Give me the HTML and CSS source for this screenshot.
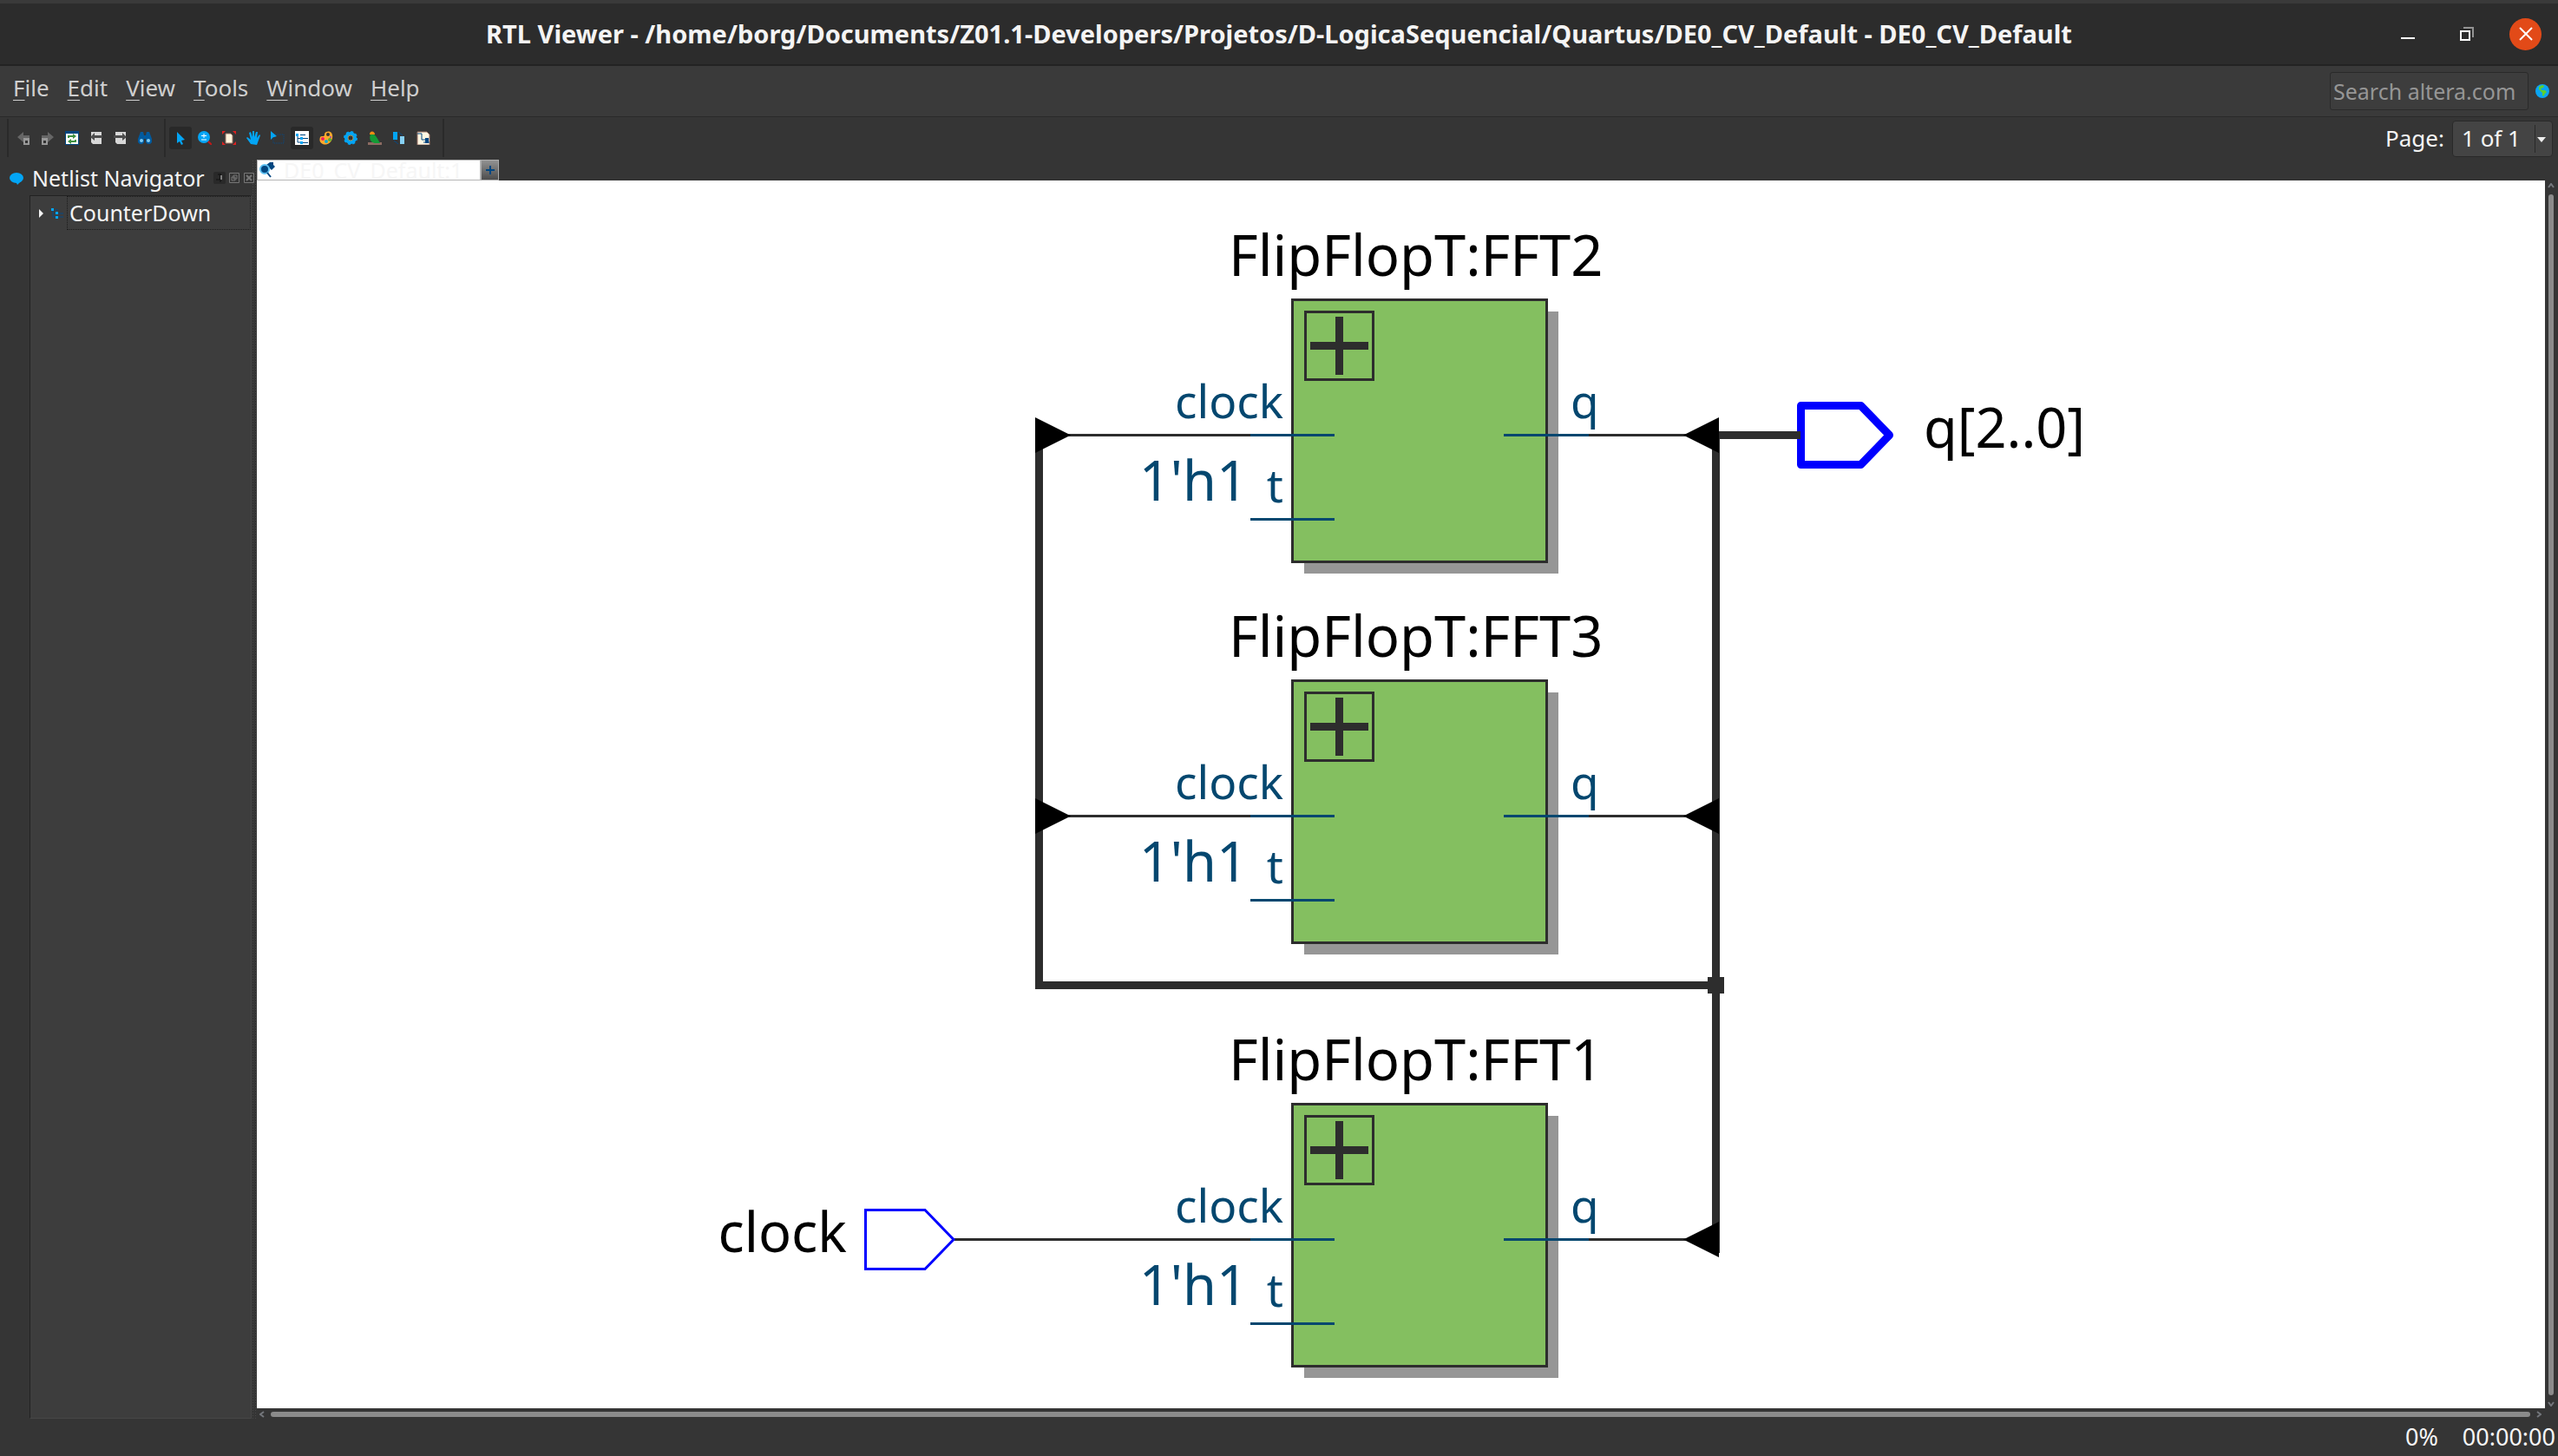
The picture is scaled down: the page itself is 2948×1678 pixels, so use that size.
FILE: index.html
```html
<!DOCTYPE html>
<html lang="en">
<head>
<meta charset="utf-8">
<title>RTL Viewer</title>
<link rel="stylesheet" href="styles.css">
</head>
<body>
<header class="titlebar">
  <h1 class="title">RTL Viewer - /home/borg/Documents/Z01.1-Developers/Projetos/D-LogicaSequencial/Quartus/DE0_CV_Default - DE0_CV_Default</h1>
  <div class="window-buttons">
    <button class="win" aria-label="Minimize"><svg width="16" height="16"><path d="M0 12h16v2H0z" fill="#fff"/></svg></button>
    <button class="win" aria-label="Restore"><svg width="16" height="16" fill="none" stroke-width="2"><path d="M4 1h11v11" stroke="#929292"/><path d="M1 5h10v10H1z" stroke="#fff"/></svg></button>
    <button class="win close" aria-label="Close"><svg width="16" height="16"><path d="M1 1l14 14M15 1L1 15" stroke="#fff" stroke-width="2"/></svg></button>
  </div>
</header>

<div class="menubar">
  <nav class="menus">
    <button class="menu"><u>F</u>ile</button>
    <button class="menu"><u>E</u>dit</button>
    <button class="menu"><u>V</u>iew</button>
    <button class="menu"><u>T</u>ools</button>
    <button class="menu"><u>W</u>indow</button>
    <button class="menu"><u>H</u>elp</button>
  </nav>
  <div class="search">
    <input class="search-box" type="text" placeholder="Search altera.com" aria-label="Search altera.com">
    <svg width="16" height="16" viewBox="0 0 16 16"><circle cx="8" cy="8" r="8" fill="#0ba5f2"/><path d="M4 3l4-2 2 1-1 2-3 1 1 2 4 0 2 2-2 2-2 3-1-1 0-3-3-3-1-1z" fill="#5fd02c"/></svg>
  </div>
</div>

<div class="toolbar">
  <div class="tools">
    <button class="tool" aria-label="Back"><svg width="16" height="16"><path d="M1 7l7-6v4h7v4H8v4z" fill="#666"/><path d="M8 8h7v8H8z" fill="#999"/><path d="M10 11h3v3h-3z" fill="#333"/></svg></button>
    <button class="tool" aria-label="Forward"><svg width="16" height="16"><path d="M15 7L8 1v4H1v4h7v4z" fill="#666"/><path d="M1 8h7v8H1z" fill="#999"/><path d="M3 11h3v3H3z" fill="#333"/></svg></button>
    <button class="tool" aria-label="Refresh"><svg width="16" height="16"><path d="M0 0h16v16H0z" fill="#014680"/><path d="M1 3h14v12H1z" fill="#fff"/><path d="M4 8V6h6M12 10v2H6" fill="none" stroke="#3f9142" stroke-width="2"/><path d="M9 3l4 3-4 3zM7 9l-4 3 4 3z" fill="#3f9142"/></svg></button>
    <button class="tool" aria-label="Previous page"><svg width="16" height="16"><path d="M2 1h12v14H4l-2-2z" fill="#d8d8d8"/><path d="M1 7l5-5v3h9v3H6v3z" fill="#4c4c4c"/></svg></button>
    <button class="tool" aria-label="Next page"><svg width="16" height="16"><path d="M2 1h12v14H4l-2-2z" fill="#d8d8d8"/><path d="M15 7l-5-5v3H0v3h10v3z" fill="#4c4c4c"/></svg></button>
    <button class="tool" aria-label="Find"><svg width="16" height="16"><path d="M3 1h3l1 4h2l1-4h3l3 8v4l-2 2h-3l-2-2V9H7v4l-2 2H2l-2-2V9z" fill="#015a9e"/><circle cx="4" cy="11" r="2" fill="#7fcdf5"/><circle cx="12" cy="11" r="2" fill="#7fcdf5"/></svg></button>
  </div>
  <div class="tools">
    <button class="tool on" aria-label="Select"><svg width="16" height="16"><path d="M4 1l9 9-4 1 2 4-2 1-2-4-3 2z" fill="#03a5f5"/></svg></button>
    <button class="tool" aria-label="Zoom"><svg width="16" height="16"><path d="M11 11l5 5" stroke="#c01818" stroke-width="2"/><circle cx="7" cy="7" r="7" fill="#03a5f5"/><path d="M7 3v5M4 5.500h6M4 10h6" stroke="#fff"/></svg></button>
    <button class="tool" aria-label="Fit"><svg width="16" height="16"><path d="M4 3h6l2 2v9H4z" fill="#fff4dc" stroke="#9b7568"/><path d="M0 0h4L0 4zM16 0h-4l4 4zM0 16h4l-4-4zM16 16h-4l4-4z" fill="#e02020"/></svg></button>
    <button class="tool" aria-label="Pan"><svg width="16" height="16"><path d="M5 15L0 8l1-1 4 3L3 2l2-1 2 6V0h2v7l2-6h2l-1 7 3-4 1 1-4 11z" fill="#03a5f5"/></svg></button>
    <button class="tool" aria-label="Select area"><svg width="16" height="16"><path d="M3 4h12v10H3z" fill="none" stroke="#064a86" stroke-dasharray="1 1"/><path d="M0 0l7 6-3 1-1 0-3 3z" fill="#03a5f5"/></svg></button>
    <button class="tool on" aria-label="Netlist"><svg width="16" height="16"><path d="M0 0h16v16H0z" fill="#fff"/><path d="M3 5v8h4M3 8.500h4M6 4.500h6M9 8.500h6M9 13.500h6" fill="none" stroke="#014680"/><path d="M1 3h3v3H1zM6 7h3v3H6zM6 12h3v3H6z" fill="#03a5f5"/></svg></button>
    <button class="tool" aria-label="Colors"><svg width="16" height="16"><path d="M8 1c5-2 8 2 7 7-1 6-7 9-11 7s-4-5-3-8c1-2 4 0 5-2 0-2 0-3 2-4z" fill="#ffa92b"/><circle cx="4" cy="9" r="2" fill="#ec1c64"/><circle cx="8" cy="12" r="2" fill="#10a8d8"/><circle cx="12" cy="10" r="2" fill="#56b330"/><circle cx="10" cy="4" r="2" fill="#333"/><circle cx="13" cy="7" r="1" fill="#9540c0"/></svg></button>
    <button class="tool" aria-label="Settings"><svg width="16" height="16"><circle cx="8" cy="8" r="7" fill="none" stroke="#03a5f5" stroke-width="2" stroke-dasharray="3 2.500"/><circle cx="8" cy="8" r="5" fill="none" stroke="#03a5f5" stroke-width="4"/><circle cx="8" cy="8" r="3" fill="#333" stroke="#a79455"/></svg></button>
    <button class="tool" aria-label="Bird's eye view"><svg width="16" height="16"><path d="M0 13h16v3H0z" fill="#8d6b62"/><path d="M3 4c5-2 7 3 11 10H8c-5-1-7-5-5-10z" fill="#149a36"/><path d="M2 3c1-4 6-3 6 1H2z" fill="#f28c13"/></svg></button>
    <button class="tool" aria-label="Partition"><svg width="16" height="16"><path d="M1 1h5v9H1z" fill="#03a5f5"/><path d="M9 6h5v9H9z" fill="#86d0f5"/><path d="M7 1l5 4M2 11l5 4" stroke="#064a86"/></svg></button>
    <button class="tool" aria-label="Export"><svg width="16" height="16"><path d="M1 1h11l3 3v12H1z" fill="#fff6e2" stroke="#9b7568"/><path d="M1 3h5v7h8M8 13h7" fill="none" stroke="#014680"/><path d="M10 8h4v6h-4z" fill="#014680"/></svg></button>
  </div>
  <div class="page">
    <label for="page">Page:</label>
    <div class="page-picker">
      <select id="page" class="page-select"><option>1 of 1</option></select>
      <svg class="page-arrow" width="10" height="6"><path d="M0 0h10L5 6z" fill="#eee"/></svg>
    </div>
  </div>
</div>

<main class="workspace">
  <aside class="navigator">
    <div class="nav-head">
      <svg width="16" height="18"><ellipse cx="8" cy="9" rx="8" ry="6" fill="#03a5f5"/><path d="M7 13h6l-4 4z" fill="#03a5f5"/></svg>
      <h2 class="nav-title">Netlist Navigator</h2>
      <div class="nav-buttons">
        <button class="mini dark" aria-label="Pin"><svg width="12" height="12"><path d="M4 2h3v6H2M7 1v10" fill="none" stroke="#111"/><path d="M8 3v5" stroke="#ddd"/></svg></button>
        <button class="mini" aria-label="Float"><svg width="12" height="12" fill="none" stroke="#777"><path d="M.5 .5h11v11H.5zM5 3h4v4H5zM3 5h4v4H3z"/></svg></button>
        <button class="mini" aria-label="Close panel"><svg width="12" height="12" fill="none" stroke="#777"><path d="M.5 .5h11v11H.5z"/><path d="M3 3l6 6M9 3L3 9" stroke-width="2"/></svg></button>
      </div>
    </div>
    <div class="tree">
      <div class="tree-row">
        <svg width="40" height="16"><path d="M10 3l5 5-5 5z" fill="#f4f4f4"/><path d="M26 4v8h12M28 4h4M28 8h10" fill="none" stroke="#064a86"/><path d="M24 2h3v3h-3zM29 6h3v3h-3zM29 11h3v3h-3z" fill="#03a5f5"/></svg>
        <span class="tree-label">CounterDown</span>
      </div>
    </div>
  </aside>
  <div class="splitter"></div>
  <section class="viewer">
    <div class="tabs">
      <button class="tab"><svg width="18" height="18"><path d="M8 3l4-3h4v3l2 2-4 4z" fill="#014680"/><circle cx="6" cy="8" r="5" fill="#014680" stroke="#5fc1f2" stroke-width="2"/><path d="M9 12l4 5" stroke="#014680" stroke-width="2"/></svg><span>DE0_CV_Default:1</span></button>
      <button class="tab-add" aria-label="New tab"><svg width="10" height="10"><path d="M0 5h10M5 0v10" stroke="#014680" stroke-width="2"/></svg></button>
    </div>
    <div class="view">
      <div class="canvas">
        <svg class="diagram" viewBox="296 208 2637 1415">
          <defs>
            <g id="flipflop">
              <path class="shadow" d="M1503 359h293v302h-293z"/>
              <path class="block" d="M1489.500 345.500h293v302h-293z"/>
              <path class="expand" d="M1504.500 359.500h78v78h-78z"/>
              <path class="plus" d="M1510 398.500h67M1543.500 365v67"/>
              <path class="wire" d="M1831 501.500h112"/>
              <path class="pin" d="M1441 501.500h97M1441 598.500h97M1733 501.500h98"/>
              <text class="port" x="1479" y="482" text-anchor="end">clock</text>
              <text class="port" x="1479" y="579" text-anchor="end">t</text>
              <text class="name teal" x="1438" y="577" text-anchor="end">1'h1</text>
              <text class="port" x="1810" y="482">q</text>
              <path d="M1981 481v41l-41-20.500z"/>
            </g>
          </defs>
          <path class="bus" d="M1197.500 501v634.500H1977.500M1977.500 501v943M1977 501.500h98"/>
          <path class="wire" d="M1230 501.500h211M1230 940.500h211M1100 1428.500h341"/>
          <path d="M1193 481v41l41-20.500zM1193 920v41l41-20.500z"/>
          <path class="node" d="M1968 1126h19v19h-19z"/>
          <use href="#flipflop"/>
          <use href="#flipflop" y="439"/>
          <use href="#flipflop" y="927"/>
          <text class="heading" x="1416" y="318">FlipFlopT:FFT2</text>
          <text class="heading" x="1416" y="757">FlipFlopT:FFT3</text>
          <text class="heading" x="1416" y="1245">FlipFlopT:FFT1</text>
          <path class="terminal wide" d="M2075.500 467.500h69l33 34-33 34h-69z"/>
          <path class="bus" d="M2060 501.500h15"/>
          <path class="terminal" d="M997.500 1394.500h68.500l33 34-33 34h-68.500z"/>
          <text class="name" x="2217" y="516">q[2..0]</text>
          <text class="name" x="976" y="1443" text-anchor="end">clock</text>
        </svg>
      </div>
      <div class="scroll vertical"><svg width="8" height="6"><path d="M1 5l3-4 3 4" fill="none" stroke="#74777c" stroke-width="2"/></svg><div class="thumb"></div><svg width="8" height="6"><path d="M1 1l3 4 3-4" fill="none" stroke="#74777c" stroke-width="2"/></svg></div>
      <div class="scroll horizontal"><svg width="6" height="8"><path d="M5 1L1 4l4 3" fill="none" stroke="#74777c" stroke-width="2"/></svg><div class="thumb"></div><svg width="6" height="8"><path d="M1 1l4 3-4 3" fill="none" stroke="#74777c" stroke-width="2"/></svg></div>
    </div>
  </section>
</main>

<footer class="status"><span>0%</span><span>00:00:00</span></footer>
</body>
</html>
```

FILE: styles.css
```css
* { box-sizing: border-box; }

body {
  margin: 0;
  min-height: 100vh;
  display: flex;
  flex-direction: column;
  background: #353535;
  color: #f4f4f4;
  font: 26px/36px "Noto Sans", sans-serif;
}

button, input, select {
  margin: 0;
  padding: 0;
  border: 0;
  background: none;
  color: inherit;
  font: inherit;
}

svg { display: block; flex: none; }

.titlebar {
  position: relative;
  display: flex;
  align-items: center;
  justify-content: center;
  height: 76px;
  border-top: 4px solid #3a3a3a;
  border-bottom: 2px solid #232323;
  background: #2c2c2c;
}
.title { margin: 0; font-size: 29px; font-weight: 700; white-space: nowrap; }
.window-buttons {
  position: absolute;
  right: 19px;
  display: flex;
  gap: 31px;
}
.win {
  width: 37px;
  height: 37px;
  display: grid;
  place-items: center;
}
.win.close { border-radius: 50%; background: #e24a18; }

.menubar {
  display: flex;
  justify-content: space-between;
  height: 59px;
  padding: 7px 10px 0 15px;
  border-bottom: 1px solid #2a2a2a;
  background: #3a3a3a;
  color: #cfcfcf;
}
.menus { display: flex; align-items: flex-start; gap: 21px; }
.menus u { text-decoration-thickness: 1px; text-underline-offset: 4px; }
.menu { line-height: 36px; }
.search { display: flex; align-items: flex-start; gap: 8px; }
.search svg { margin-top: 14px; }
.search-box {
  width: 229px;
  height: 44px;
  padding-left: 3px;
  border: 1px solid #2a2a2a;
  border-radius: 3px;
  background: #3d3d3d;
  font-size: 25px;
}
.search-box::placeholder { color: #969696; opacity: 1; }

.toolbar {
  display: flex;
  height: 49px;
  padding: 2px 6px 0 8px;
}
.tools {
  display: flex;
  align-items: center;
  gap: 2px;
  height: 44px;
  padding: 0 9px 0 4px;
  border-left: 2px solid #2a2a2a;
}
.tools:nth-child(2) { border-right: 2px solid #2a2a2a; }
.tool {
  display: grid;
  place-items: center;
  width: 26px;
  height: 26px;
  border-radius: 3px;
}
.tool.on { background: #292929; }
.page { display: flex; gap: 9px; margin-left: auto; padding-top: 2px; }
.page label { line-height: 40px; }
.page-picker { position: relative; width: 116px; height: 42px; }
.page-select {
  appearance: none;
  width: 100%;
  height: 100%;
  padding: 0 0 2px 10px;
  border: 1px solid #292929;
  border-radius: 4px;
  background: linear-gradient(#292929, #292929) 94px 4px / 1px 32px no-repeat #444;
}
.page-arrow { position: absolute; right: 8px; top: 19px; pointer-events: none; }

.workspace { flex: 1; display: flex; min-height: 0; }
.navigator { width: 290px; display: flex; flex-direction: column; padding-bottom: 10px; }
.nav-head {
  display: flex;
  align-items: center;
  gap: 10px;
  height: 41px;
  padding: 1px 3px 0 11px;
}
.nav-title { margin: 0; font-size: 25px; font-weight: 400; white-space: nowrap; }
.nav-buttons { display: flex; gap: 3px; margin-left: auto; }
.mini { display: grid; place-items: center; width: 14px; height: 14px; border-radius: 2px; }
.mini.dark { background: #292929; }
.tree {
  flex: 1;
  margin-left: 34px;
  border: 1px solid #474747;
  border-top-color: #222;
  border-left-color: #222;
  background: #3d3d3d;
  font-size: 25px;
}
.tree-row { display: flex; align-items: center; gap: 2px; height: 39px; }
.tree-label { flex: 1; height: 39px; padding-left: 2px; border: 1px dotted #1c1c1c; }

.splitter {
  width: 6px;
  margin-bottom: 10px;
  background: radial-gradient(#484848 1px, transparent 1px) 0 0 / 3px 3px;
}

.viewer { flex: 1; display: flex; flex-direction: column; min-width: 0; }
.tabs { display: flex; height: 24px; }
.tab {
  display: flex;
  align-items: center;
  gap: 10px;
  width: 258px;
  padding-left: 2px;
  border: 1px solid #b5b5b5;
  background: #fff;
  color: #f6f6f6;
  font-size: 25px;
  line-height: 22px;
}
.tab-add {
  display: grid;
  place-items: center;
  width: 21px;
  border: 1px solid #aaa;
  background: linear-gradient(#929292, #4c4c4c);
}
.view {
  flex: 1;
  display: grid;
  grid-template: 1fr 22px / 1fr 15px;
  min-height: 0;
}
.canvas { min-width: 0; min-height: 0; background: #fff; }
.diagram { width: 100%; height: 100%; }
.scroll { display: flex; align-items: center; }
.scroll .thumb { flex: 1; border-radius: 3px; background: #8b8b8b; }
.vertical { flex-direction: column; gap: 7px; padding: 3px 1px 2px 0; }
.vertical .thumb { width: 6px; }
.horizontal { gap: 7px; height: 14px; padding: 0 4px 0 3px; }
.horizontal .thumb { height: 6px; }

.status {
  display: flex;
  justify-content: flex-end;
  gap: 28px;
  height: 33px;
  padding-right: 3px;
  font-size: 27px;
  line-height: 22px;
}

.shadow { fill: #969696; }
.block { fill: #84bf60; stroke: #2d2d2d; stroke-width: 3px; }
.expand { fill: none; stroke: #2d2d2d; stroke-width: 3px; }
.plus { stroke: #2d2d2d; stroke-width: 9px; }
.wire { fill: none; stroke: #2d2d2d; stroke-width: 3px; }
.bus { fill: none; stroke: #2d2d2d; stroke-width: 9px; }
.node { fill: #2d2d2d; }
.pin { stroke: #04476f; stroke-width: 3px; }
.terminal { fill: #fff; stroke: #00f; stroke-width: 3px; }
.terminal.wide { stroke-width: 9px; stroke-linejoin: round; }
.heading { font-size: 65px; }
.name { font-size: 63px; }
.port { font-size: 53px; fill: #04476f; }
.teal { fill: #04476f; }
```
